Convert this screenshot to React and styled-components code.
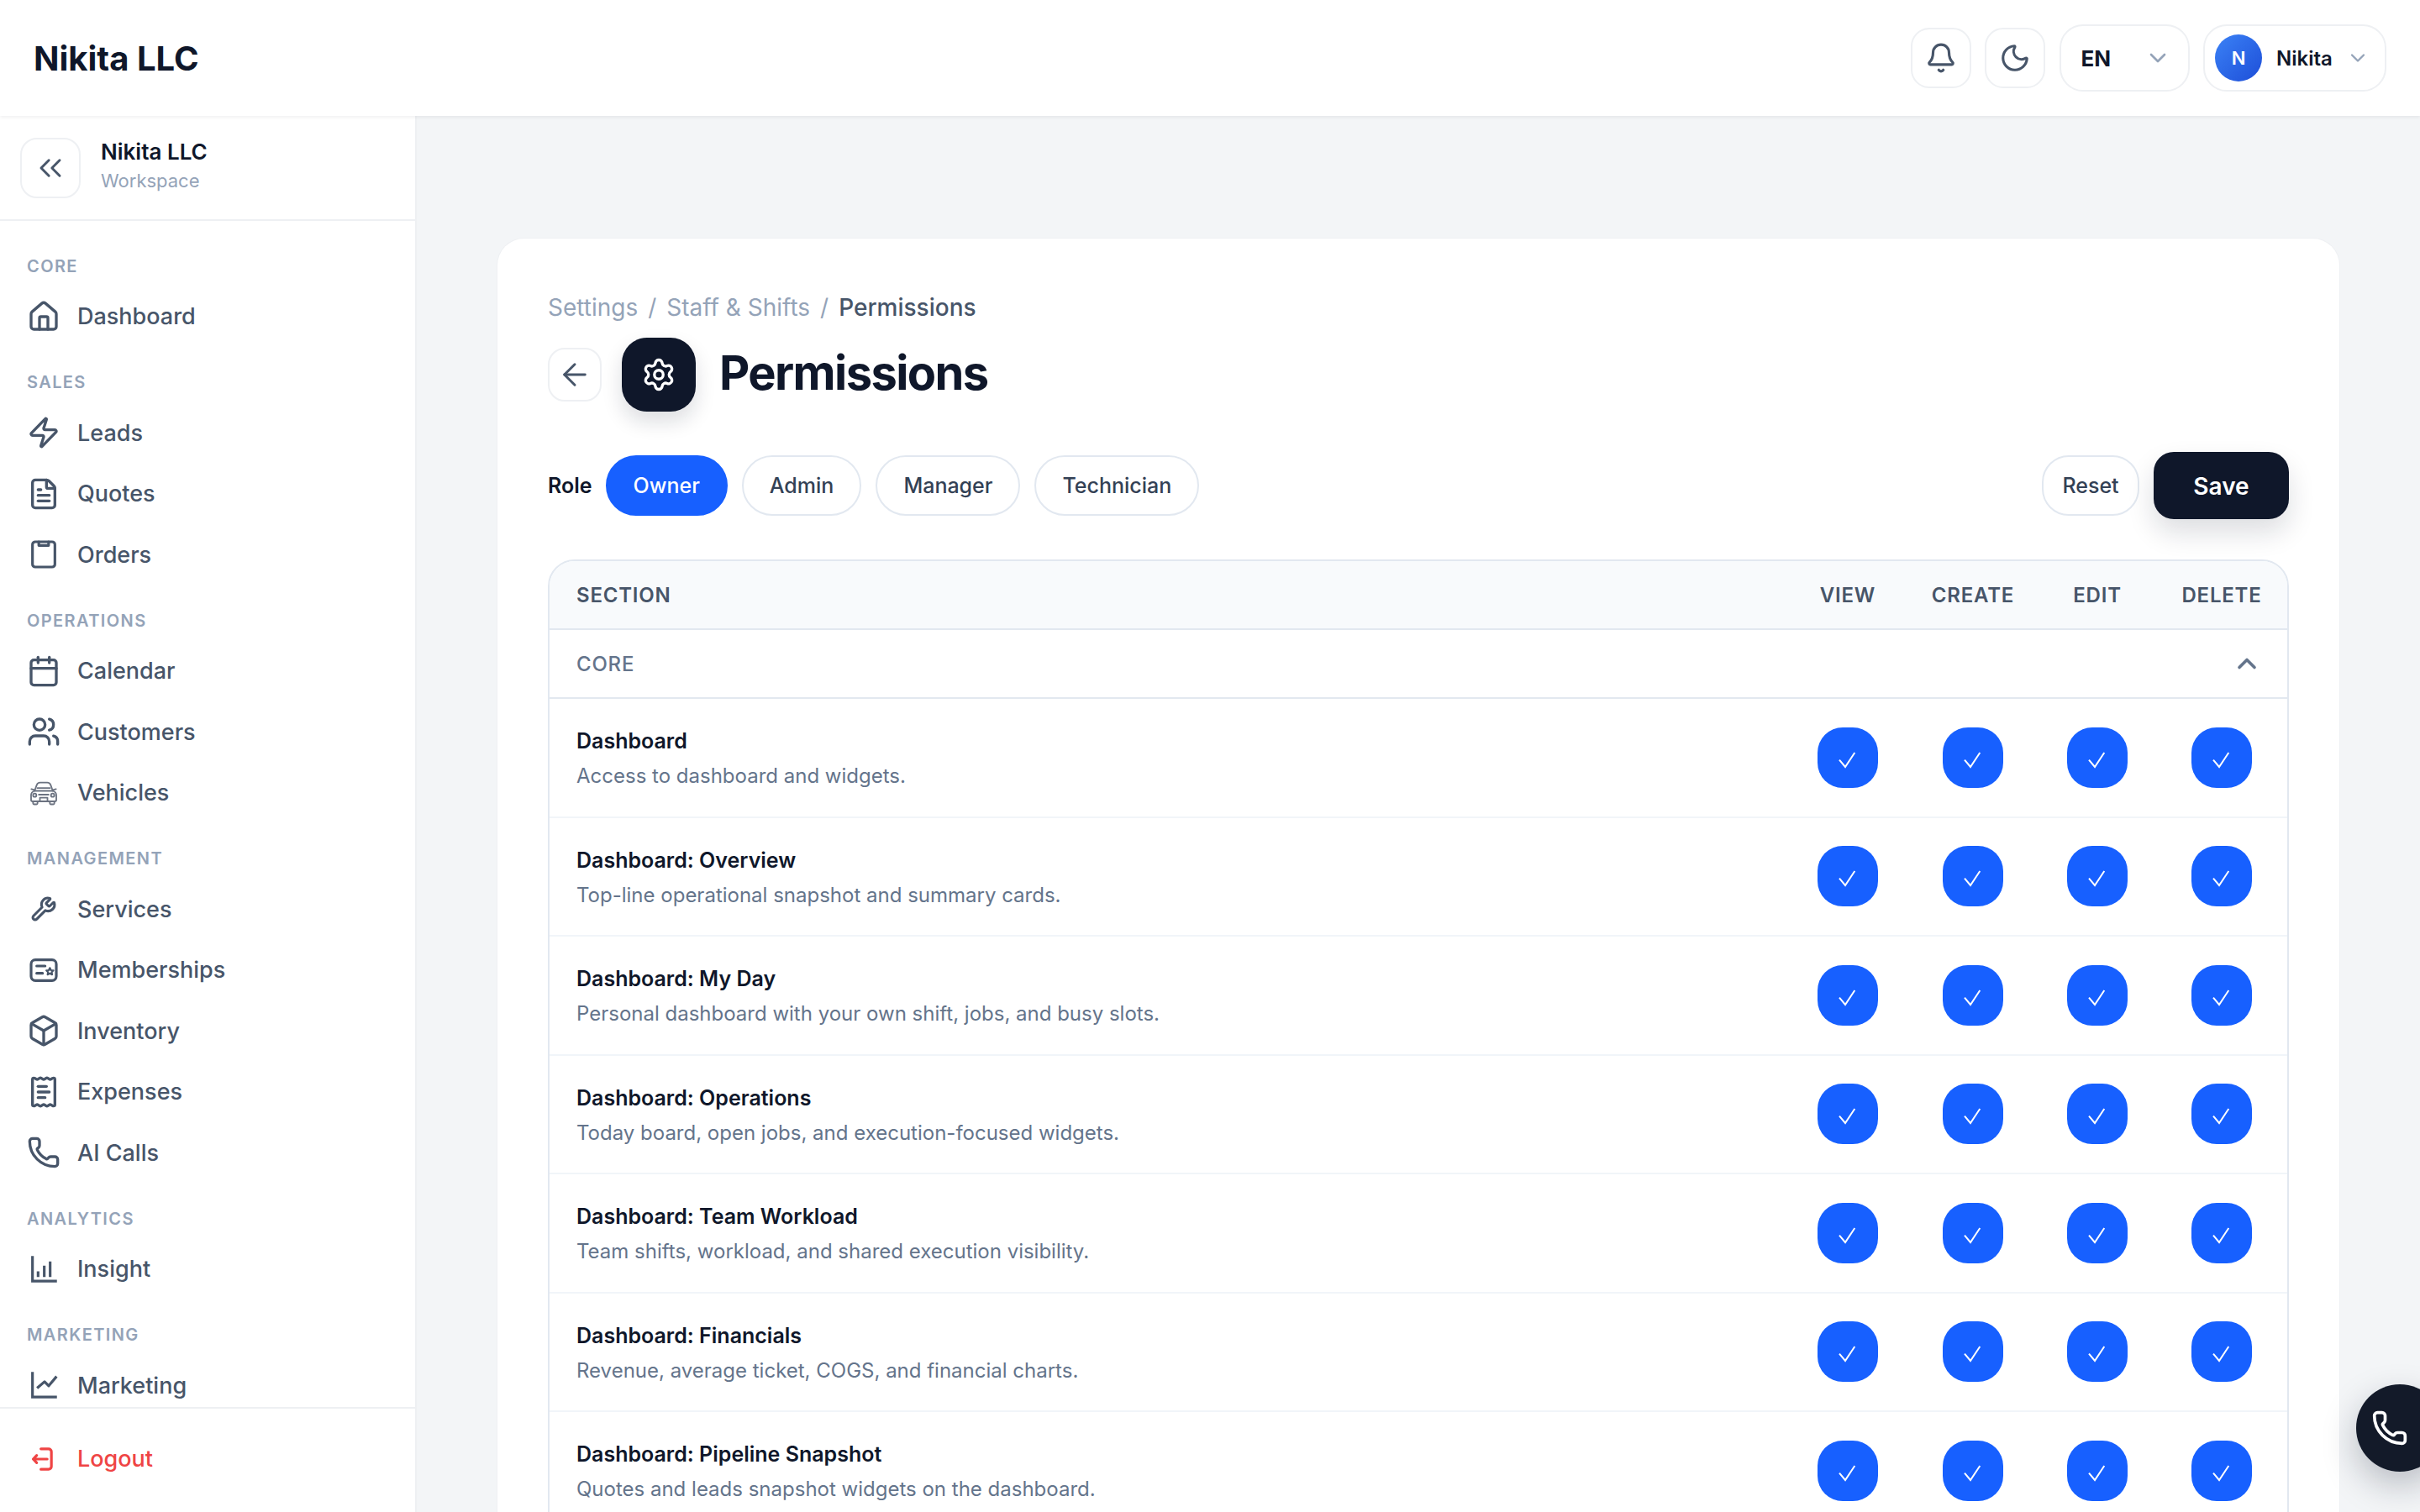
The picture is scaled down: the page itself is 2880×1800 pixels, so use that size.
import React from "react";
import styled, { createGlobalStyle } from "styled-components";
import {
  ArrowLeft, Bell, Box, Calendar, ChevronDown, ChevronUp,
  ChevronsLeft, FileText, House, Moon, Phone, ReceiptText, Settings, Users, Wrench, Zap,
} from "lucide-react";

const Global = createGlobalStyle`
  * { box-sizing: border-box; }
  html, body { margin: 0; height: 100%; overflow: hidden; }
  body { font-family: Inter, "Liberation Sans", sans-serif; background: #f3f5f7; color: #0f172a; }
  #root { height: 100%; }
`;

const stroke = { viewBox: "0 0 24 24", fill: "none", stroke: "currentColor", strokeWidth: 1.9, strokeLinecap: "round", strokeLinejoin: "round" };

function OrdersIcon(props) {
  return (
    <svg {...stroke} {...props}>
      <rect x="4" y="3" width="16" height="18" rx="2" />
      <path d="M8.5 3v2.6h7V3" />
    </svg>
  );
}

function CarIcon(props) {
  return (
    <svg {...stroke} strokeWidth="1.1" stroke="#6b7280" {...props}>
      <path d="M5.5 10.5 7 6.4C7.4 5.2 8.2 4.6 9.4 4.6h5.2c1.2 0 2 .6 2.4 1.8l1.5 4.1" />
      <path d="M5.5 10.5h13c1.6.6 2.5 1.6 2.5 3V17c0 .6-.4 1-1 1H4c-.6 0-1-.4-1-1v-3.5c0-1.4.9-2.4 2.5-3z" />
      <path d="M7.5 8.5h9M5.4 9.8 3.2 9.2M18.6 9.8l2.2-.6" />
      <circle cx="5.6" cy="13.6" r="1.2" />
      <circle cx="18.4" cy="13.6" r="1.2" />
      <path d="M9.3 18v-2.6h5.4V18M8.5 13.2h7" />
      <path d="M4.4 18v1.4c0 .4.3.7.7.7h1.8c.4 0 .7-.3.7-.7V18M16.4 18v1.4c0 .4.3.7.7.7h1.8c.4 0 .7-.3.7-.7V18" />
    </svg>
  );
}

function WrenchIcon(props) {
  return <Wrench viewBox="-3.5 -3.5 31 31" strokeWidth={2.4} {...props} />;
}

function MemberIcon(props) {
  return (
    <svg {...stroke} {...props}>
      <rect x="3" y="4.6" width="18" height="14.8" rx="3" />
      <path d="M7 9h6M7 14.2h4.2" />
      <path d="m16.4 10.4.8 1.6 1.7.2-1.2 1.2.3 1.7-1.6-.8-1.6.8.3-1.7-1.2-1.2 1.7-.2z" strokeWidth="1.3" />
    </svg>
  );
}

function InsightIcon(props) {
  return (
    <svg {...stroke} strokeLinecap="square" strokeLinejoin="miter" {...props}>
      <path d="M4 3.5v17h16.5" />
      <path d="M8 13.5v4M12.4 9.5v8M16.6 6.5v11" strokeLinecap="butt" />
    </svg>
  );
}

function TrendIcon(props) {
  return (
    <svg {...stroke} strokeLinecap="square" strokeLinejoin="miter" {...props}>
      <path d="M4 3.5v17h16.5" />
      <path d="m8 13.5 4.6-4 3 3 5-6" strokeLinejoin="round" />
    </svg>
  );
}

function LogoutIcon(props) {
  return (
    <svg {...stroke} {...props}>
      <path d="M10 4.7h5.5a2 2 0 0 1 2 2v10.6a2 2 0 0 1-2 2H10" />
      <path d="M14.5 12H4.5M7 9.4 4.5 12 7 14.6" />
    </svg>
  );
}

function TickIcon() {
  return (
    <svg width="24" height="24" viewBox="0 0 24 24" fill="none" stroke="currentColor" strokeWidth="2" overflow="visible">
      <path d="M2 14.7 9 23 20.3 6" />
    </svg>
  );
}

const navSections = [
  { label: "Core", items: [["Dashboard", House]] },
  { label: "Sales", items: [["Leads", Zap], ["Quotes", FileText], ["Orders", OrdersIcon]] },
  { label: "Operations", items: [["Calendar", Calendar], ["Customers", Users], ["Vehicles", CarIcon]] },
  {
    label: "Management",
    items: [["Services", WrenchIcon], ["Memberships", MemberIcon], ["Inventory", Box], ["Expenses", ReceiptText], ["AI Calls", Phone]],
  },
  { label: "Analytics", items: [["Insight", InsightIcon]] },
  { label: "Marketing", items: [["Marketing", TrendIcon]] },
];

const permissions = [
  ["Dashboard", "Access to dashboard and widgets."],
  ["Dashboard: Overview", "Top-line operational snapshot and summary cards."],
  ["Dashboard: My Day", "Personal dashboard with your own shift, jobs, and busy slots."],
  ["Dashboard: Operations", "Today board, open jobs, and execution-focused widgets."],
  ["Dashboard: Team Workload", "Team shifts, workload, and shared execution visibility."],
  ["Dashboard: Financials", "Revenue, average ticket, COGS, and financial charts."],
  ["Dashboard: Pipeline Snapshot", "Quotes and leads snapshot widgets on the dashboard."],
];

const Shell = styled.div`
  display: flex;
  flex-direction: column;
  height: 1800px;
  width: 2880px;
  position: relative;
  overflow: hidden;
`;

// top bar
const TopBar = styled.header`
  flex: none;
  height: 138px;
  background: #fff;
  display: flex;
  align-items: center;
  justify-content: space-between;
  padding: 0 40px;
  box-shadow: 0 2px 4px rgba(15, 23, 42, 0.06);
  position: relative;
  z-index: 2;
`;
const Brand = styled.div`
  font-size: 40px;
  font-weight: 700;
`;
const TopActions = styled.div`
  display: flex;
  align-items: center;
  gap: 16.5px;
`;
const IconButton = styled.button`
  width: 72px;
  height: 72px;
  padding: 0;
  display: flex;
  align-items: center;
  justify-content: center;
  background: #fff;
  border: 2px solid #eef0f3;
  border-radius: 22px;
  color: #475569;
`;
const Select = styled.div`
  height: 80px;
  display: flex;
  align-items: center;
  background: #fff;
  border: 2px solid #eef0f3;
  border-radius: 28px;
`;
const LangSelect = styled(Select)`
  width: 155px;
  padding: 0 20px 0 24px;
  justify-content: space-between;
  font-size: 26px;
  font-weight: 700;
  color: #94a3b8;
  span { color: #0f172a; }
`;
const UserSelect = styled(Select)`
  width: 218px;
  padding: 0 18px 0 12px;
  color: #94a3b8;
`;
const Avatar = styled.div`
  width: 56px;
  height: 56px;
  border-radius: 50%;
  display: flex;
  align-items: center;
  justify-content: center;
  background: linear-gradient(135deg, #3b82f6, #1d4ed8);
  color: #fff;
  font-size: 22px;
  font-weight: 600;
`;
const UserName = styled.span`
  margin: 0 auto 0 17px;
  font-size: 24px;
  font-weight: 600;
  color: #0f172a;
`;

const Body = styled.div`
  flex: 1;
  min-height: 0;
  display: flex;
`;

// sidebar
const Sidebar = styled.aside`
  flex: none;
  width: 496px;
  display: flex;
  flex-direction: column;
  background: #fff;
  border-right: 2px solid #eef0f3;
`;
const SideHead = styled.div`
  flex: none;
  height: 125px;
  display: flex;
  align-items: center;
  gap: 24px;
  padding: 0 24px;
  border-bottom: 2px solid #eef0f3;
`;
const CollapseButton = styled(IconButton)`
  border-radius: 20px;
`;
const WorkspaceInfo = styled.div`
  margin-top: -5px;
`;
const WorkspaceName = styled.div`
  font-size: 26px;
  font-weight: 600;
  line-height: 36px;
`;
const WorkspaceSub = styled.div`
  font-size: 22px;
  line-height: 32px;
  color: #94a3b8;
`;
const Nav = styled.nav`
  flex: 1;
  min-height: 0;
  overflow: hidden;
  padding: 11.5px 32px 0;
`;
const NavSection = styled.div`
  margin-top: 27px;
`;
const NavLabel = styled.div`
  height: 30px;
  margin-bottom: 9px;
  line-height: 30px;
  font-size: 20px;
  font-weight: 600;
  letter-spacing: 1.4px;
  text-transform: uppercase;
  color: #94a3b8;
`;
const NavItem = styled.div`
  height: 72.5px;
  display: flex;
  align-items: center;
  gap: 20px;
  font-size: 27px;
  font-weight: 500;
  color: ${(p) => (p.$danger ? "#ef4444" : "#475569")};
  svg { width: 40px; height: 40px; flex: none; }
`;
const SideFoot = styled.div`
  flex: none;
  height: 125px;
  display: flex;
  align-items: center;
  padding: 0 32px 4px;
  border-top: 2px solid #eef0f3;
`;

// main
const Main = styled.main`
  flex: 1;
  min-width: 0;
  padding: 146px 96px 0;
`;
const Card = styled.section`
  background: #fff;
  border-radius: 32px 32px 0 0;
  box-shadow: 0 0 0 1px #eef0f3;
  padding: 60px 60px 0;
  height: 1600px;
`;
const Crumbs = styled.div`
  display: flex;
  gap: 12px;
  font-size: 28px;
  line-height: 44px;
  color: #94a3b8;
`;
const CrumbNow = styled.span`
  color: #475569;
  font-weight: 500;
`;
const TitleRow = styled.div`
  display: flex;
  align-items: center;
  margin-top: 14px;
`;
const BackButton = styled(IconButton)`
  width: 64px;
  height: 64px;
  border-radius: 20px;
`;
const TitleIcon = styled.div`
  width: 88px;
  height: 88px;
  margin: 0 28px 0 24px;
  display: flex;
  align-items: center;
  justify-content: center;
  border-radius: 30px;
  background: #0f172a;
  color: #fff;
  box-shadow: 0 12px 24px rgba(15, 23, 42, 0.14);
`;
const Title = styled.h1`
  margin: 0;
  padding-bottom: 4px;
  font-size: 56px;
  font-weight: 700;
  letter-spacing: -1.6px;
`;
const Toolbar = styled.div`
  display: flex;
  align-items: center;
  justify-content: space-between;
  height: 80px;
  margin-top: 48px;
`;
const Roles = styled.div`
  display: flex;
  align-items: center;
  gap: 17px;
`;
const RoleLabel = styled.span`
  margin-right: -1px;
  font-size: 25px;
  font-weight: 600;
`;
const Pill = styled.div`
  height: 72px;
  display: flex;
  align-items: center;
  padding: 0 31px;
  border-radius: 36px;
  font-size: 25px;
  font-weight: 500;
  border: 2px solid ${(p) => (p.$active ? "#1760ff" : "#e2e8f0")};
  background: ${(p) => (p.$active ? "#1760ff" : "#fff")};
  color: ${(p) => (p.$active ? "#fff" : "#334155")};
`;
const ResetButton = styled(Pill)`
  width: 116px;
  padding: 0;
  justify-content: center;
  border-radius: 32px;
`;
const Actions = styled.div`
  display: flex;
  align-items: center;
  gap: 17px;
`;
const SaveButton = styled.div`
  width: 161px;
  height: 80px;
  padding-top: 2px;
  display: flex;
  align-items: center;
  justify-content: center;
  border-radius: 24px;
  background: #0f172a;
  color: #fff;
  font-size: 28px;
  font-weight: 600;
  box-shadow: 0 16px 32px rgba(15, 23, 42, 0.14);
`;

// permissions table
const Table = styled.div`
  margin-top: 48px;
  border: 2px solid #e2e8f0;
  border-radius: 32px 32px 0 0;
  overflow: hidden;
`;
const grid = `
  display: grid;
  grid-template-columns: 1fr 150px 148px 148px 148px;
  align-items: center;
  padding: 0 4px 0 32px;
`;
const HeadRow = styled.div`
  ${grid}
  height: 82px;
  background: #f8fafc;
  border-bottom: 2px solid #e2e8f0;
  font-size: 24px;
  font-weight: 600;
  letter-spacing: 0.8px;
  color: #475569;
`;
const HeadCell = styled.div`
  text-align: center;
`;
const GroupRow = styled.div`
  height: 82px;
  display: flex;
  align-items: center;
  justify-content: space-between;
  padding: 0 30px 0 32px;
  border-bottom: 2px solid #e2e8f0;
  font-size: 24px;
  font-weight: 500;
  letter-spacing: 0.8px;
  color: #64748b;
`;
const Row = styled.div`
  ${grid}
  height: 141.5px;
  border-bottom: 2px solid #f1f5f9;
`;
const RowText = styled.div`
  padding-top: 3px;
`;
const RowTitle = styled.div`
  font-size: 25px;
  font-weight: 600;
  line-height: 36px;
`;
const RowSub = styled.div`
  margin-top: 6px;
  font-size: 24px;
  line-height: 36px;
  color: #64748b;
`;
const CheckBox = styled.div`
  width: 72px;
  height: 72px;
  justify-self: center;
  display: flex;
  align-items: center;
  justify-content: center;
  border-radius: 30px;
  background: #1760ff;
  color: #fff;
`;
const CallFab = styled.div`
  position: absolute;
  left: 2804px;
  top: 1648px;
  width: 104px;
  height: 104px;
  padding-left: 18px;
  display: flex;
  align-items: center;
  border-radius: 52px;
  background: #131a29;
  color: #fff;
  box-shadow: 0 16px 40px rgba(15, 23, 42, 0.25);
  z-index: 3;
`;

export default function App() {
  return (
    <Shell>
      <Global />
      <TopBar>
        <Brand>Nikita LLC</Brand>
        <TopActions>
          <IconButton><Bell size={38} /></IconButton>
          <IconButton><Moon size={38} /></IconButton>
          <LangSelect><span>EN</span><ChevronDown size={32} /></LangSelect>
          <UserSelect>
            <Avatar>N</Avatar>
            <UserName>Nikita</UserName>
            <ChevronDown size={28} />
          </UserSelect>
        </TopActions>
      </TopBar>
      <Body>
        <Sidebar>
          <SideHead>
            <CollapseButton><ChevronsLeft size={44} strokeWidth={1.6} /></CollapseButton>
            <WorkspaceInfo>
              <WorkspaceName>Nikita LLC</WorkspaceName>
              <WorkspaceSub>Workspace</WorkspaceSub>
            </WorkspaceInfo>
          </SideHead>
          <Nav>
            {navSections.map((section) => (
              <NavSection key={section.label}>
                <NavLabel>{section.label}</NavLabel>
                {section.items.map(([name, Icon]) => (
                  <NavItem key={name}><Icon />{name}</NavItem>
                ))}
              </NavSection>
            ))}
          </Nav>
          <SideFoot>
            <NavItem $danger><LogoutIcon />Logout</NavItem>
          </SideFoot>
        </Sidebar>
        <Main>
          <Card>
            <Crumbs>
              <span>Settings</span><span>/</span><span>Staff &amp; Shifts</span><span>/</span>
              <CrumbNow>Permissions</CrumbNow>
            </Crumbs>
            <TitleRow>
              <BackButton><ArrowLeft size={42} strokeWidth={1.7} /></BackButton>
              <TitleIcon><Settings size={42} strokeWidth={1.9} /></TitleIcon>
              <Title>Permissions</Title>
            </TitleRow>
            <Toolbar>
              <Roles>
                <RoleLabel>Role</RoleLabel>
                <Pill $active>Owner</Pill>
                <Pill>Admin</Pill>
                <Pill>Manager</Pill>
                <Pill>Technician</Pill>
              </Roles>
              <Actions>
                <ResetButton>Reset</ResetButton>
                <SaveButton>Save</SaveButton>
              </Actions>
            </Toolbar>
            <Table>
              <HeadRow>
                <div>SECTION</div>
                <HeadCell>VIEW</HeadCell>
                <HeadCell>CREATE</HeadCell>
                <HeadCell>EDIT</HeadCell>
                <HeadCell>DELETE</HeadCell>
              </HeadRow>
              <GroupRow>CORE<ChevronUp size={36} strokeWidth={2.4} /></GroupRow>
              {permissions.map(([title, sub]) => (
                <Row key={title}>
                  <RowText>
                    <RowTitle>{title}</RowTitle>
                    <RowSub>{sub}</RowSub>
                  </RowText>
                  {[0, 1, 2, 3].map((i) => (
                    <CheckBox key={i}><TickIcon /></CheckBox>
                  ))}
                </Row>
              ))}
            </Table>
          </Card>
        </Main>
      </Body>
      <CallFab><Phone size={44} /></CallFab>
    </Shell>
  );
}
